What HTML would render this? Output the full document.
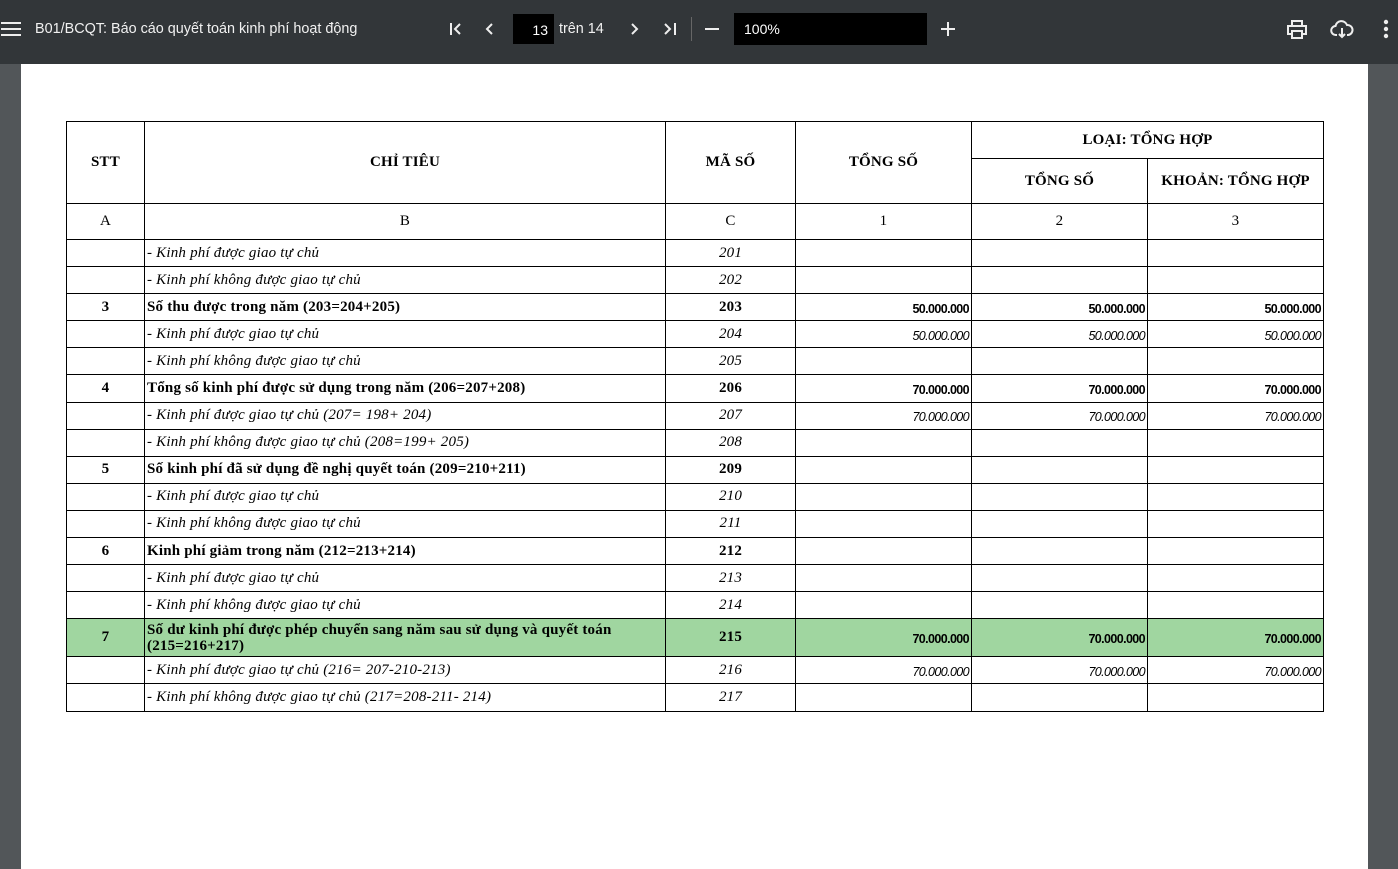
<!DOCTYPE html>
<html><head><meta charset="utf-8"><style>
*{margin:0;padding:0;box-sizing:border-box}
html,body{width:1398px;height:869px;overflow:hidden;background:#525659;font-family:"Liberation Sans",sans-serif}
.bar{position:absolute;left:0;top:0;width:1398px;height:64px;background:#323639;color:#f1f1f1}
.page{position:absolute;left:21px;top:64px;width:1347px;height:805px;background:#fff}
.t{position:absolute;font-size:14.4px;top:21px}
table{position:absolute;left:66px;top:121px;border-collapse:collapse;table-layout:fixed;font-family:"Liberation Serif",serif;font-size:15px;letter-spacing:0.2px;color:#000}
td{border:1px solid #000;padding:0 2px;white-space:nowrap;overflow:hidden}
.c{text-align:center}.b{font-weight:bold}.i{font-style:italic}
.n{text-align:right;font-family:"Liberation Sans",sans-serif;font-size:12.5px;letter-spacing:-0.6px;padding:3px 2px 0 0}
tr.r td{height:27.1px}
.g td{background:#a0d6a0}
</style></head><body>
<div class="bar">
<svg style="position:absolute;left:1px;top:20px" width="20" height="18"><rect x="0" y="2" width="20" height="2" fill="#eee"/><rect x="0" y="8" width="20" height="2" fill="#eee"/><rect x="0" y="14" width="20" height="2" fill="#eee"/></svg>
<div class="t" style="left:35px">B01/BCQT: Báo cáo quyết toán kinh phí hoạt động</div>
<svg style="position:absolute;left:448px;top:21px" width="16" height="16" fill="none" stroke="#eee" stroke-width="2"><path d="M3 2v12M12 3L7 8l5 5"/></svg>
<svg style="position:absolute;left:482px;top:21px" width="16" height="16" fill="none" stroke="#eee" stroke-width="2"><path d="M10 3L5 8l5 5"/></svg>
<div style="position:absolute;left:513px;top:14px;width:41px;height:30px;background:#000;color:#fff;font-size:14px;text-align:right;padding:8px 6px 0 0">13</div>
<div class="t" style="left:559px">trên 14</div>
<svg style="position:absolute;left:626px;top:21px" width="16" height="16" fill="none" stroke="#eee" stroke-width="2"><path d="M6 3l5 5-5 5"/></svg>
<svg style="position:absolute;left:662px;top:21px" width="16" height="16" fill="none" stroke="#eee" stroke-width="2"><path d="M3 3l5 5-5 5M13 2v12"/></svg>
<div style="position:absolute;left:691px;top:17px;width:1px;height:24px;background:#666"></div>
<svg style="position:absolute;left:704px;top:21px" width="16" height="16"><rect x="1" y="7" width="14" height="2" fill="#eee"/></svg>
<div style="position:absolute;left:734px;top:13px;width:193px;height:32px;background:#000;color:#fff;font-size:14px;padding:8px 0 0 10px">100%</div>
<svg style="position:absolute;left:940px;top:21px" width="16" height="16"><rect x="1" y="7" width="14" height="2" fill="#eee"/><rect x="7" y="1" width="2" height="14" fill="#eee"/></svg>
<svg style="position:absolute;left:1286px;top:18px" width="22" height="22" fill="none" stroke="#eee" stroke-width="2"><path d="M6 7V3h10v4M5 16H2V8h18v8h-3M6 13h10v7H6z"/></svg>
<svg style="position:absolute;left:1330px;top:17px" width="24" height="24" fill="none" stroke="#eee" stroke-width="2"><path d="M7 18H6a4.5 4.5 0 0 1-.5-9A6 6 0 0 1 17 8a4.5 4.5 0 0 1 1 10h-1M12 11v9M9 17l3 3 3-3"/></svg>
<svg style="position:absolute;left:1382px;top:19px" width="8" height="22" fill="#eee"><circle cx="4" cy="3" r="2.2"/><circle cx="4" cy="10" r="2.2"/><circle cx="4" cy="17" r="2.2"/></svg>
</div>
<div class="page"></div>
<table>
<colgroup><col style="width:78px"><col style="width:521px"><col style="width:130px"><col style="width:176px"><col style="width:176px"><col style="width:176px"></colgroup>
<tr style="height:37px"><td rowspan="2" class="c b">STT</td><td rowspan="2" class="c b">CHỈ TIÊU</td><td rowspan="2" class="c b">MÃ SỐ</td><td rowspan="2" class="c b">TỔNG SỐ</td><td colspan="2" class="c b">LOẠI: TỔNG HỢP</td></tr>
<tr style="height:45px"><td class="c b">TỔNG SỐ</td><td class="c b">KHOẢN: TỔNG HỢP</td></tr>
<tr style="height:36px"><td class="c">A</td><td class="c">B</td><td class="c">C</td><td class="c">1</td><td class="c">2</td><td class="c">3</td></tr>
<tr class="r"><td></td><td class="i">- Kinh phí được giao tự chủ</td><td class="c i">201</td><td></td><td></td><td></td></tr>
<tr class="r"><td></td><td class="i">- Kinh phí không được giao tự chủ</td><td class="c i">202</td><td></td><td></td><td></td></tr>
<tr class="r"><td class="c b">3</td><td class="b">Số thu được trong năm (203=204+205)</td><td class="c b">203</td><td class="n b">50.000.000</td><td class="n b">50.000.000</td><td class="n b">50.000.000</td></tr>
<tr class="r"><td></td><td class="i">- Kinh phí được giao tự chủ</td><td class="c i">204</td><td class="n i">50.000.000</td><td class="n i">50.000.000</td><td class="n i">50.000.000</td></tr>
<tr class="r"><td></td><td class="i">- Kinh phí không được giao tự chủ</td><td class="c i">205</td><td></td><td></td><td></td></tr>
<tr class="r"><td class="c b">4</td><td class="b">Tổng số kinh phí được sử dụng trong năm (206=207+208)</td><td class="c b">206</td><td class="n b">70.000.000</td><td class="n b">70.000.000</td><td class="n b">70.000.000</td></tr>
<tr class="r"><td></td><td class="i">- Kinh phí được giao tự chủ (207= 198+ 204)</td><td class="c i">207</td><td class="n i">70.000.000</td><td class="n i">70.000.000</td><td class="n i">70.000.000</td></tr>
<tr class="r"><td></td><td class="i">- Kinh phí không được giao tự chủ (208=199+ 205)</td><td class="c i">208</td><td></td><td></td><td></td></tr>
<tr class="r"><td class="c b">5</td><td class="b">Số kinh phí đã sử dụng đề nghị quyết toán (209=210+211)</td><td class="c b">209</td><td></td><td></td><td></td></tr>
<tr class="r"><td></td><td class="i">- Kinh phí được giao tự chủ</td><td class="c i">210</td><td></td><td></td><td></td></tr>
<tr class="r"><td></td><td class="i">- Kinh phí không được giao tự chủ</td><td class="c i">211</td><td></td><td></td><td></td></tr>
<tr class="r"><td class="c b">6</td><td class="b">Kinh phí giảm trong năm (212=213+214)</td><td class="c b">212</td><td></td><td></td><td></td></tr>
<tr class="r"><td></td><td class="i">- Kinh phí được giao tự chủ</td><td class="c i">213</td><td></td><td></td><td></td></tr>
<tr class="r"><td></td><td class="i">- Kinh phí không được giao tự chủ</td><td class="c i">214</td><td></td><td></td><td></td></tr>
<tr class="g" style="height:38px"><td class="c b">7</td><td class="b" style="line-height:16px">Số dư kinh phí được phép chuyển sang năm sau sử dụng và quyết toán<br>(215=216+217)</td><td class="c b">215</td><td class="n b">70.000.000</td><td class="n b">70.000.000</td><td class="n b">70.000.000</td></tr>
<tr class="r"><td></td><td class="i">- Kinh phí được giao tự chủ (216= 207-210-213)</td><td class="c i">216</td><td class="n i">70.000.000</td><td class="n i">70.000.000</td><td class="n i">70.000.000</td></tr>
<tr class="r"><td></td><td class="i">- Kinh phí không được giao tự chủ (217=208-211- 214)</td><td class="c i">217</td><td></td><td></td><td></td></tr>
</table>
</body></html>
